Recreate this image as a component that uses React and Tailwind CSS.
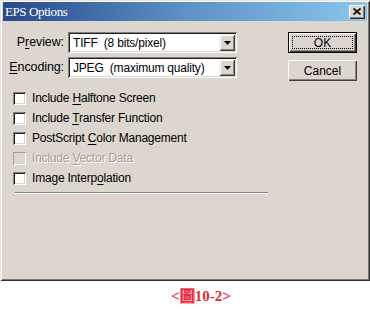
import React from "react";

const ui = { fontFamily: '"Liberation Sans", Arial, sans-serif' };

function U({ children }) {
  return <span className="underline underline-offset-[2px] decoration-[1px]">{children}</span>;
}

function Select({ children }) {
  return (
    <div className="flex h-[21px] w-[169px] bg-white shadow-[inset_1px_1px_#808080,inset_-1px_-1px_#ffffff,inset_2px_2px_#202020,inset_-2px_-2px_#dcd6cf] p-[2px]">
      <div className="flex-1 flex items-center pl-[3px] text-[12px] tracking-[-0.2px] whitespace-pre text-black">{children}</div>
      <div className="w-[16px] h-[17px] bg-[#ddd6cf] shadow-[inset_1px_1px_#f2eee9,inset_-1px_-1px_#404040,inset_2px_2px_#ffffff,inset_-2px_-2px_#8a847e] flex items-center justify-center">
        <svg width="7" height="4" viewBox="0 0 7 4"><path d="M0 0h7L3.5 4z" fill="#000" /></svg>
      </div>
    </div>
  );
}

function Check({ children, disabled }) {
  return (
    <div className="h-[20px] flex items-center">
      <div
        className={
          "w-[13px] h-[13px] ml-[13px] " +
          (disabled
            ? "bg-[#ddd6cf] shadow-[inset_1px_1px_#a8a29c,inset_-1px_-1px_#ffffff]"
            : "bg-white shadow-[inset_1px_1px_#808080,inset_-1px_-1px_#ffffff,inset_2px_2px_#202020,inset_-2px_-2px_#dcd6cf]")
        }
      />
      <span
        className={
          "ml-[6px] text-[12px] tracking-[-0.2px] " +
          (disabled ? "text-[#a39d97] [text-shadow:1px_1px_0_#ffffff]" : "text-black")
        }
      >
        {children}
      </span>
    </div>
  );
}

function Button({ children, def }) {
  return (
    <div
      className={
        "w-[69px] h-[21px] bg-[#ddd6cf] flex items-center justify-center text-[12px] text-black " +
        (def
          ? "shadow-[inset_1px_1px_#000,inset_-1px_-1px_#000,inset_2px_2px_#ffffff,inset_-2px_-2px_#404040,inset_-3px_-3px_#8a847e]"
          : "shadow-[inset_1px_1px_#ffffff,inset_-1px_-1px_#404040,inset_-2px_-2px_#8a847e]")
      }
    >
      {def ? (
        <div className="w-[61px] h-[13px] border border-dotted border-black flex items-center justify-center leading-none">
          {children}
        </div>
      ) : (
        children
      )}
    </div>
  );
}

export default function App() {
  return (
    <div className="w-[370px] h-[310px] bg-white relative" style={ui}>
      <div className="w-[370px] h-[281px] bg-[#ddd6cf] shadow-[inset_1px_1px_#e8e3de,inset_-1px_-1px_#303030,inset_2px_2px_#ffffff,inset_-2px_-2px_#7c7771] pt-[2px] pl-[3px] pr-[3px] flex flex-col">
        <div className="h-[19px] bg-gradient-to-r from-[#28498a] via-[#5c92c6] to-[#8ac6ec] flex items-center justify-between pl-[2px] pr-[2px]">
          <span
            className="text-white text-[13px] tracking-[-0.4px] leading-none"
            style={{ fontFamily: '"Liberation Serif", "Times New Roman", serif' }}
          >
            EPS Options
          </span>
          <div className="w-[16px] h-[14px] bg-[#ddd6cf] shadow-[inset_1px_1px_#ffffff,inset_-1px_-1px_#303030,inset_-2px_-2px_#8a847e] flex items-center justify-center">
            <svg width="8" height="7" viewBox="0 0 8 7">
              <path d="M0.5 0.5L7.5 6.5M7.5 0.5L0.5 6.5" stroke="#000" strokeWidth="1.6" />
            </svg>
          </div>
        </div>
        <div className="flex pt-[11px]">
          <div className="w-[270px]">
            <div className="flex items-center h-[21px]">
              <div className="w-[62px] text-right text-[12.5px] tracking-[-0.1px] pr-[1px]">
                P<U>r</U>eview:
              </div>
              <div className="ml-[3px]">
                <Select>TIFF  (8 bits/pixel)</Select>
              </div>
            </div>
            <div className="flex items-center h-[21px] mt-[4px]">
              <div className="w-[62px] text-right text-[12.5px] tracking-[-0.1px] pr-[1px]">
                <U>E</U>ncoding:
              </div>
              <div className="ml-[3px]">
                <Select>JPEG  (maximum quality)</Select>
              </div>
            </div>
            <div className="mt-[10px] -ml-[3px]">
              <Check>Include <U>H</U>alftone Screen</Check>
              <Check>Include <U>T</U>ransfer Function</Check>
              <Check>PostScript <U>C</U>olor Management</Check>
              <Check disabled>Include <U>V</U>ector Data</Check>
              <Check>Image Interp<U>o</U>lation</Check>
            </div>
            <div className="mt-[4px] ml-[12px] w-[253px] h-[2px] border-t border-[#8a847e] border-b border-b-white" />
          </div>
          <div className="ml-[15px] flex flex-col gap-[7px]">
            <Button def>OK</Button>
            <Button>Cancel</Button>
          </div>
        </div>
      </div>
      <div className="flex justify-center pt-[8px] pl-[32px]">
        <span
          className="text-[#e8283a] text-[15px] font-semibold leading-none"
          style={{ fontFamily: '"Liberation Serif", "Noto Sans CJK TC", serif' }}
        >
          &lt;<span className="bg-[#f7a8b0]">圖</span>10-2&gt;
        </span>
      </div>
    </div>
  );
}
